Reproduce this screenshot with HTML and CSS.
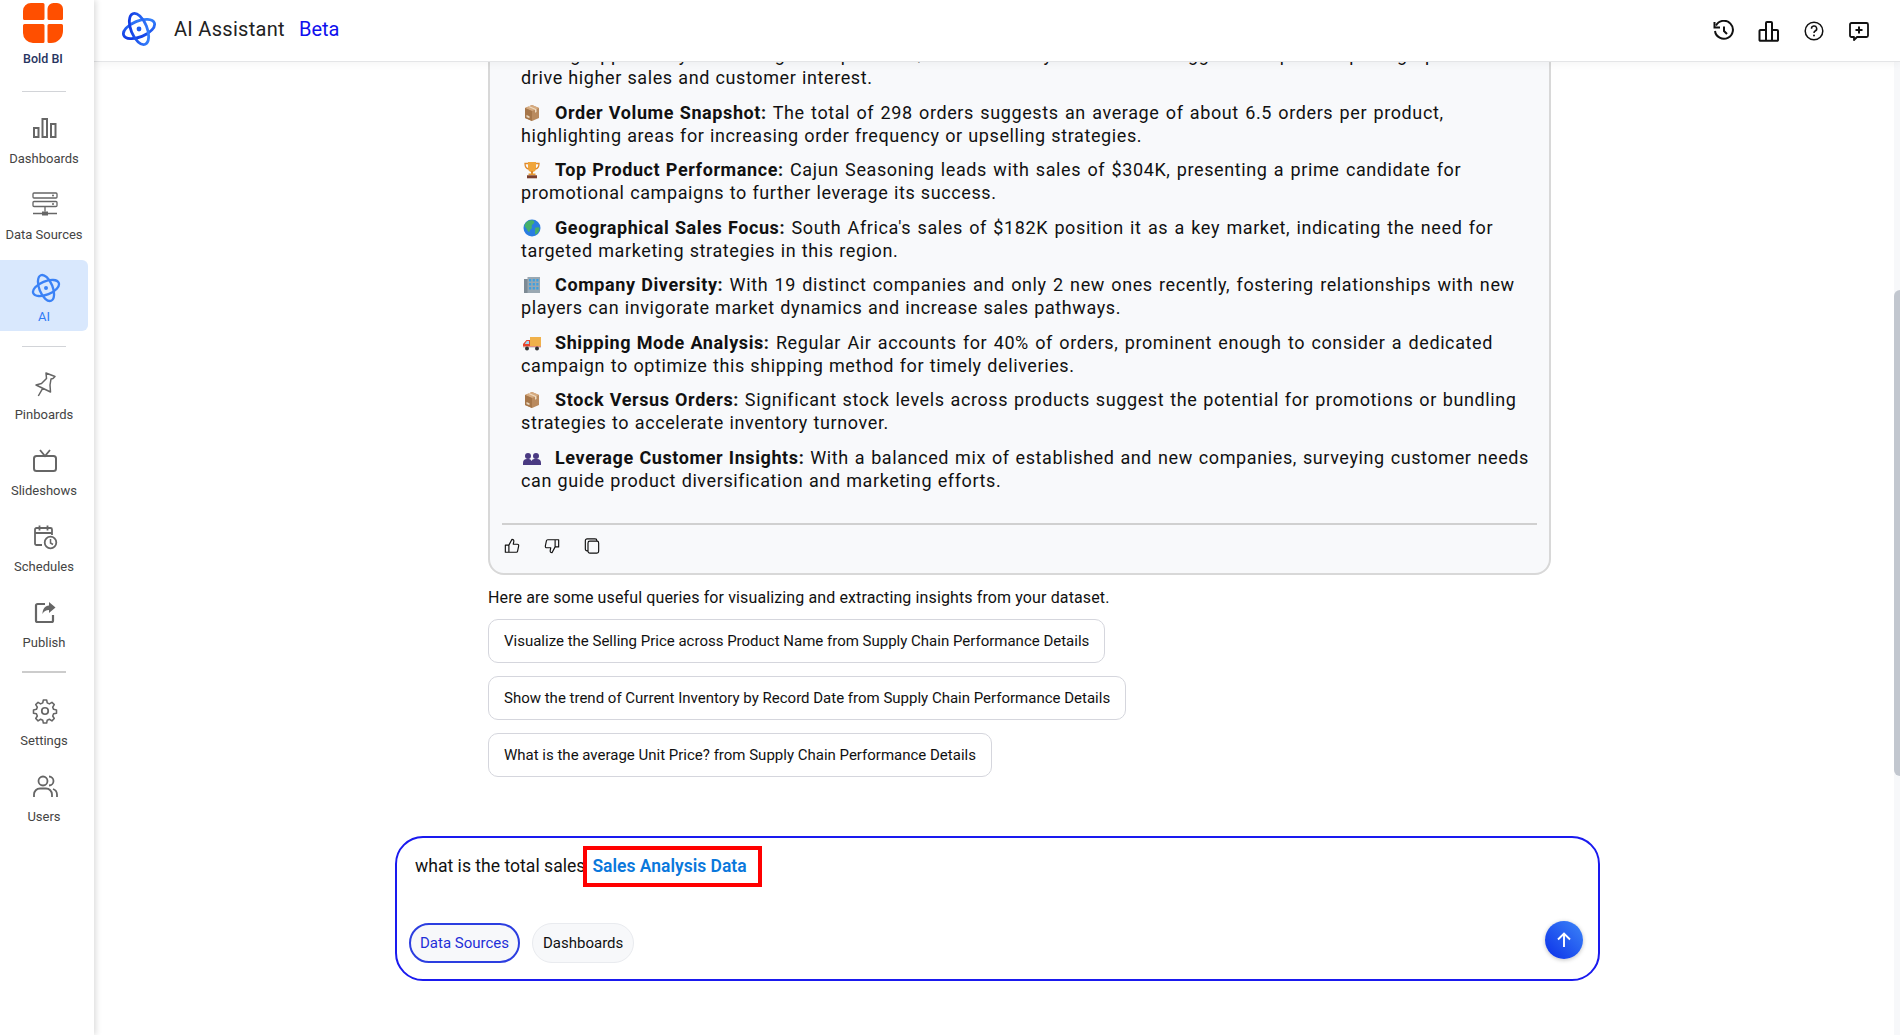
FILE: index.html
```html
<!DOCTYPE html>
<html lang="en">
<head>
<meta charset="utf-8">
<title>Bold BI - AI Assistant</title>
<link rel="stylesheet" href="styles.css">
</head>
<body>
<svg class="defs" width="0" height="0" aria-hidden="true">
  <defs>
    <linearGradient id="atomg" x1="0" y1="1" x2="1" y2="0"><stop offset="0" stop-color="#0b2fe0"/><stop offset="1" stop-color="#3b8cff"/></linearGradient>
    <symbol id="atom" viewBox="0 0 36 36">
      <g fill="none" stroke-width="2.8">
        <ellipse cx="18" cy="18" rx="16.5" ry="8" transform="rotate(-22 18 18)"/>
        <ellipse cx="18" cy="18" rx="16.5" ry="8" transform="rotate(68 18 18)"/>
      </g>
      <circle cx="18" cy="18" r="2.4" stroke="none" class="atom-dot"/>
    </symbol>
    <symbol id="box" viewBox="0 0 18 18">
      <path d="M9 1l7 3v10l-7 3-7-3V4z" fill="#b98a5e"/>
      <path d="M9 1l7 3-7 3-7-3z" fill="#d6ab80"/>
      <path d="M9 7v10l-7-3V4z" fill="#a67649"/>
      <path d="M5 2.800l7 3v3l1.500-.7V5.200L6.500 2.200z" fill="#efdcc2"/>
      <path d="M3.500 11l3 1.300v2l-3-1.300z" fill="#e8d5bb"/>
    </symbol>
  </defs>
</svg>
<div class="app">
  <nav class="sidebar">
    <div class="brand">
      <svg class="brand-logo" viewBox="0 0 40 40">
        <path d="M0 8a8 8 0 0 1 8-8h12a1.500 1.500 0 0 1 1.500 1.500V15.500A1.500 1.500 0 0 1 20 17H1.500A1.500 1.500 0 0 1 0 15.500zM24.500 6a6 6 0 0 1 6-6H34a6 6 0 0 1 6 6v9.500a1.500 1.500 0 0 1-1.500 1.500H26a1.500 1.500 0 0 1-1.500-1.500zM0 22.500A1.500 1.500 0 0 1 1.500 21H20a1.500 1.500 0 0 1 1.500 1.500V38.500A1.500 1.500 0 0 1 20 40H10A10 10 0 0 1 0 30zM24.500 22.500A1.500 1.500 0 0 1 26 21h12.500a1.500 1.500 0 0 1 1.500 1.500V28a12 12 0 0 1-12 12h-2a1.500 1.500 0 0 1-1.500-1.500z" fill="#ff4f00"/>
      </svg>
      <span class="brand-name">Bold BI</span>
    </div>
    <hr class="nav-rule rule-brand">
    <a class="nav-item">
      <svg class="nav-icon" viewBox="0 0 26 26"><g fill="none" stroke="#666" stroke-width="2"><rect x="2" y="12" width="4.500" height="9"/><rect x="10.500" y="3" width="4.500" height="18"/><rect x="19" y="8" width="4.500" height="13"/></g></svg>
      <span>Dashboards</span>
    </a>
    <a class="nav-item">
      <svg class="nav-icon" viewBox="0 0 26 26"><g fill="none" stroke="#666" stroke-width="1.300"><rect x="1" y="1" width="24" height="5" rx="1"/><rect x="1" y="9.500" width="24" height="5" rx="1"/></g><path d="M13 14.500v5M1 21.500h24" stroke="#666" stroke-width="1.300"/><rect x="10" y="19.500" width="6" height="4" fill="#666"/><circle cx="21" cy="3.500" r="1" fill="#666"/><circle cx="21" cy="12" r="1" fill="#666"/></svg>
      <span>Data Sources</span>
    </a>
    <a class="nav-item active">
      <svg class="nav-icon ai-icon" viewBox="0 0 36 36"><use href="#atom"/></svg>
      <span>AI</span>
    </a>
    <hr class="nav-rule rule-ai">
    <a class="nav-item">
      <svg class="nav-icon" viewBox="0 0 26 26"><path d="M14 1l9 3.500-2 2-2 .5-1 6 .5 7L4 13l5.500-1.500 5-5zM10.700 16.300L6.300 24" fill="none" stroke="#666" stroke-width="1.500" stroke-linejoin="round"/></svg>
      <span>Pinboards</span>
    </a>
    <a class="nav-item">
      <svg class="nav-icon" viewBox="0 0 26 26"><rect x="2" y="8" width="22" height="15" rx="2.500" fill="none" stroke="#666" stroke-width="2"/><path d="M8 2l5 6 5-6" fill="none" stroke="#666" stroke-width="1.800"/></svg>
      <span>Slideshows</span>
    </a>
    <a class="nav-item">
      <svg class="nav-icon" viewBox="0 0 26 26"><path d="M10 21H4.500A1.500 1.500 0 0 1 3 19.500V5.500A1.500 1.500 0 0 1 4.500 4h14A1.500 1.500 0 0 1 20 5.500V11M3 9h17M7.500 1.500v5M15.500 1.500v5" fill="none" stroke="#666" stroke-width="1.800"/><circle cx="18.500" cy="18.500" r="5.800" fill="none" stroke="#666" stroke-width="1.800"/><path d="M18.500 15v4l2.500 1.500" fill="none" stroke="#666" stroke-width="1.500"/></svg>
      <span>Schedules</span>
    </a>
    <a class="nav-item">
      <svg class="nav-icon" viewBox="0 0 26 26"><path d="M13 4H5.500A1.500 1.500 0 0 0 4 5.500v15A1.500 1.500 0 0 0 5.500 22h14a1.500 1.500 0 0 0 1.500-1.500V15" fill="none" stroke="#666" stroke-width="2.200"/><path d="M17 2l6.500 5.500L17 13v-3c-3 0-5 1-6.500 4 0-5 2.500-8 6.500-8.500z" fill="#666"/></svg>
      <span>Publish</span>
    </a>
    <hr class="nav-rule rule-publish">
    <a class="nav-item">
      <svg class="nav-icon" viewBox="0 0 24 24"><path d="M10.300 1.700h3.400l.6 3 2.200 1 2.600-1.600 2.400 2.400-1.600 2.600.9 2.200 3 .6v3.400l-3 .6-.9 2.200 1.600 2.600-2.400 2.400-2.600-1.600-2.200.9-.6 3h-3.400l-.6-3-2.200-.9-2.600 1.600-2.400-2.400 1.600-2.600-.9-2.200-3-.6v-3.400l3-.6.9-2.200-1.600-2.600 2.400-2.400 2.600 1.600 2.200-1z" transform="translate(12 12) scale(.9) translate(-12 -13)" fill="none" stroke="#666" stroke-width="1.600" stroke-linejoin="round"/><circle cx="12" cy="12" r="3" fill="none" stroke="#666" stroke-width="1.600"/></svg>
      <span>Settings</span>
    </a>
    <a class="nav-item">
      <svg class="nav-icon" viewBox="0 0 26 26"><circle cx="11" cy="7" r="4.500" fill="none" stroke="#666" stroke-width="1.800"/><path d="M2 23v-2.500a6 6 0 0 1 6-6h6a6 6 0 0 1 6 6V23M17 2.500a4.500 4.500 0 0 1 0 9M21 15a6 6 0 0 1 4 5.500V23" fill="none" stroke="#666" stroke-width="1.800"/></svg>
      <span>Users</span>
    </a>
  </nav>
  <div class="workspace">
    <header class="topbar">
      <svg class="top-logo" viewBox="0 0 36 36"><use href="#atom"/></svg>
      <span class="top-title">AI Assistant</span>
      <span class="top-beta">Beta</span>
      <div class="top-actions">
        <svg class="top-icon" viewBox="0 0 22 22"><path d="M3 5.500A9 9 0 1 1 2 11" fill="none" stroke="#111" stroke-width="2"/><path d="M1.500 2v5.500H7" fill="none" stroke="#111" stroke-width="2"/><path d="M11 6.500V11l3 3" fill="none" stroke="#111" stroke-width="2"/></svg>
        <svg class="top-icon" viewBox="0 0 22 22"><path d="M1.500 20V11a1 1 0 0 1 1-1h5.500V3a1 1 0 0 1 1-1h4a1 1 0 0 1 1 1v7h5a1 1 0 0 1 1 1v9a.8.8 0 0 1-.8.800H2.300a.8.8 0 0 1-.8-.8zM8 10v10.500M14 10v10.500" fill="none" stroke="#111" stroke-width="2"/></svg>
        <svg class="top-icon" viewBox="0 0 22 22"><circle cx="11" cy="11" r="8.800" fill="none" stroke="#111" stroke-width="1.500"/><path d="M8.500 8.700a2.600 2.600 0 1 1 3.700 2.300c-.9.500-1.200 1-1.200 2" fill="none" stroke="#111" stroke-width="1.500"/><circle cx="11" cy="15.500" r="1" fill="#111"/></svg>
        <svg class="top-icon" viewBox="0 0 22 22"><path d="M3.500 3h15A1.500 1.500 0 0 1 20 4.500v11a1.500 1.500 0 0 1-1.500 1.500H9l-3 3v-3H3.500A1.500 1.500 0 0 1 2 15.500v-11A1.500 1.500 0 0 1 3.500 3z" fill="none" stroke="#111" stroke-width="1.800" stroke-linejoin="round"/><path d="M11 6.500v7M7.500 10h7" stroke="#111" stroke-width="2"/></svg>
      </div>
    </header>
    <div class="main">
      <div class="thread">
        <section class="answer">
          <div class="answer-body">
            <p>Pricing Opportunity: An average unit price of $22 and healthy stock levels suggest competitive pricing options to<br>drive higher sales and customer interest.</p>
            <p><svg class="emoji" viewBox="0 0 18 18"><use href="#box"/></svg><b>Order Volume Snapshot:</b> The total of 298 orders suggests an average of about 6.5 orders per product, highlighting areas for increasing order frequency or upselling strategies.</p>
            <p><svg class="emoji" viewBox="0 0 18 18"><path d="M5 1h8v6a4 4 0 0 1-8 0z" fill="#f0a53a"/><path d="M5 2.500H2c0 3 1 5 3.500 5.500M13 2.500h3c0 3-1 5-3.500 5.500" fill="none" stroke="#e08a2a" stroke-width="1.300"/><rect x="8" y="10" width="2" height="3" fill="#d9862c"/><rect x="5.500" y="12.500" width="7" height="1.800" fill="#e59a35"/><rect x="4" y="14.300" width="10" height="3" fill="#7c3f2c"/></svg><b>Top Product Performance:</b> Cajun Seasoning leads with sales of $304K, presenting a prime candidate for promotional campaigns to further leverage its success.</p>
            <p><svg class="emoji" viewBox="0 0 18 18"><circle cx="9" cy="9" r="8.500" fill="#2a7de1"/><path d="M5 2c2-1 5-1 6 0 1 2-1 3-2 4s1 3-1 4-1 3-2 3-2-3-3-4-2-2-1-4 2-2 3-3zM12 9c2-1 4-1 4.500 0 0 3-2 6-4 6.500-1-2 0-3-.5-6.500z" fill="#46b06a"/></svg><b>Geographical Sales Focus:</b> South Africa's sales of $182K position it as a key market, indicating the need for targeted marketing strategies in this region.</p>
            <p><svg class="emoji" viewBox="0 0 18 18"><rect x="1" y="3" width="4" height="14" fill="#7d8a94"/><rect x="4.500" y="1" width="12.500" height="16" fill="#9aa8b2"/><g fill="#3fa0e0"><rect x="6" y="3" width="2.200" height="2.500"/><rect x="9.700" y="3" width="2.200" height="2.500"/><rect x="13.300" y="3" width="2.200" height="2.500"/><rect x="6" y="7" width="2.200" height="2.500"/><rect x="9.700" y="7" width="2.200" height="2.500"/><rect x="13.300" y="7" width="2.200" height="2.500"/><rect x="6" y="11" width="2.200" height="2.500"/><rect x="9.700" y="11" width="2.200" height="2.500"/><rect x="13.300" y="11" width="2.200" height="2.500"/></g></svg><b>Company Diversity:</b> With 19 distinct companies and only 2 new ones recently, fostering relationships with new players can invigorate market dynamics and increase sales pathways.</p>
            <p><svg class="emoji" viewBox="0 0 18 18"><rect x="7" y="3" width="11" height="9" fill="#f0b14a"/><path d="M7 6H3.500L0 10v4h18v-2H7z" fill="#e8452c"/><path d="M3.800 7H6v3H1.800z" fill="#9fd6f0"/><rect x="0" y="12.500" width="18" height="1.500" fill="#d8d8d8"/><circle cx="4" cy="14.500" r="2" fill="#333"/><circle cx="14" cy="14.500" r="2" fill="#333"/></svg><b>Shipping Mode Analysis:</b> Regular Air accounts for 40% of orders, prominent enough to consider a dedicated campaign to optimize this shipping method for timely deliveries.</p>
            <p><svg class="emoji" viewBox="0 0 18 18"><use href="#box"/></svg><b>Stock Versus Orders:</b> Significant stock levels across products suggest the potential for promotions or bundling strategies to accelerate inventory turnover.</p>
            <p><svg class="emoji" viewBox="0 0 18 18"><g fill="#4a3a82"><circle cx="5" cy="7" r="3"/><circle cx="13" cy="7" r="3"/><path d="M0 16v-2a4 4 0 0 1 4-4h2a3 3 0 0 1 2.500 2 3 3 0 0 1 3-2H14a4 4 0 0 1 4 4v2z"/></g></svg><b>Leverage Customer Insights:</b> With a balanced mix of established and new companies, surveying customer needs can guide product diversification and marketing efforts.</p>
          </div>
          <div class="answer-actions">
            <svg class="act-icon" viewBox="0 0 18 18"><path d="M5.500 8L9 1.500c1.500 0 2.300 1 2 2.500l-.6 3H15a1.500 1.500 0 0 1 1.500 1.800l-1.200 6A1.500 1.500 0 0 1 13.800 16H1.500V8h4zM5.500 8v8" fill="none" stroke="#111" stroke-width="1.300" stroke-linejoin="round"/></svg>
            <svg class="act-icon" viewBox="0 0 18 18"><path d="M12.500 10L9 16.500c-1.500 0-2.300-1-2-2.500l.6-3H3a1.500 1.500 0 0 1-1.500-1.800l1.200-6A1.500 1.500 0 0 1 4.200 2h12.300v8h-4zM12.500 10V2" fill="none" stroke="#111" stroke-width="1.300" stroke-linejoin="round"/></svg>
            <svg class="act-icon" viewBox="0 0 18 18"><rect x="4.500" y="3.500" width="12" height="13.500" rx="2" fill="none" stroke="#111" stroke-width="1.300"/><path d="M4.500 14.500H3.500a2 2 0 0 1-2-2V3a2 2 0 0 1 2-2h9a2 2 0 0 1 2 2v.5" fill="none" stroke="#111" stroke-width="1.300"/></svg>
          </div>
        </section>
        <p class="suggest-intro">Here are some useful queries for visualizing and extracting insights from your dataset.</p>
        <div class="suggestions">
          <button class="suggestion">Visualize the Selling Price across Product Name from Supply Chain Performance Details</button>
          <button class="suggestion">Show the trend of Current Inventory by Record Date from Supply Chain Performance Details</button>
          <button class="suggestion">What is the average Unit Price? from Supply Chain Performance Details</button>
        </div>
      </div>
      <form class="composer">
        <div class="composer-text">
          <span class="typed">what is the total sales</span>
          <span class="mention">Sales Analysis Data</span>
        </div>
        <div class="composer-foot">
          <button type="button" class="pill pill-on">Data Sources</button>
          <button type="button" class="pill">Dashboards</button>
          <button type="button" class="send" aria-label="Send">
            <svg viewBox="0 0 20 20" width="20" height="20"><path d="M10 17V3.500M4 9.500l6-6 6 6" fill="none" stroke="#fff" stroke-width="1.900"/></svg>
          </button>
        </div>
      </form>
      <div class="scrollbar"><div class="scroll-thumb"></div></div>
    </div>
  </div>
</div>
</body>
</html>
```
FILE: styles.css
```css
* { box-sizing: border-box; }
html, body { margin: 0; height: 100%; overflow: hidden; background: #fff; }
body { font-family: Roboto, "Liberation Sans", sans-serif; color: #111; }
.defs { position: absolute; }
.app { display: flex; height: 1035px; }

.sidebar {
  width: 94px; flex: none; display: flex; flex-direction: column; align-items: stretch;
  background: #fff; box-shadow: 2px 0 6px rgba(0,0,0,.14); z-index: 3; padding-top: 3px;
}
.brand { display: flex; flex-direction: column; align-items: center; width: 86px; }
.brand-logo { width: 40px; height: 40px; }
.brand-name { font-size: 12.500px; font-weight: 500; color: #27345f; margin-top: 9px; line-height: 14px; }
.nav-rule { width: 44px; height: 1px; border: 0; background: #d2d4d8; margin: 6px 0 0 22px; flex: none; }
.rule-brand { margin-top: 25px; margin-bottom: 14px; }
.nav-item {
  display: flex; flex-direction: column; align-items: center; height: 76px; padding-top: 10px;
  width: 88px; font-size: 13px; line-height: 16px; color: #444; flex: none;
}
.nav-item .nav-icon { width: 26px; height: 26px; margin-left: 2px; margin-bottom: 9px; flex: none; }
.nav-item.active { height: 71px; padding-top: 13px; margin-top: 2px; background: #d9e8fd; color: #2f7bf6; border-radius: 0 6px 6px 0; }
.nav-item .ai-icon { stroke: #3b82f6; fill: #3b82f6; width: 30px; height: 30px; margin-bottom: 6px; margin-left: 4px; }
.rule-ai { margin-top: 15px; margin-bottom: 15px; }
.rule-publish { height: 2px; background: #ccc; margin-top: 5px; margin-bottom: 15px; }

.workspace { flex: 1; min-width: 0; display: flex; flex-direction: column; height: 100%; }
.topbar {
  height: 62px; flex: none; display: flex; align-items: center; padding: 0 30px 3px 27px;
  background: #fff; border-bottom: 1px solid #e4e5e7; box-shadow: 0 3px 8px rgba(0,0,0,.04); z-index: 2;
}
.top-logo { width: 36px; height: 36px; stroke: url(#atomg); fill: #1e5cf0; margin-right: 17px; }
.top-title { font-size: 20px; color: #222; letter-spacing: .3px; }
.top-beta { font-size: 20px; color: #1010ee; margin-left: 14px; }
.top-actions { margin-left: auto; display: flex; gap: 23px; align-items: center; padding-top: 4px; }
.top-icon { width: 22px; height: 22px; }

.main { flex: 1; min-height: 0; position: relative; overflow: hidden; display: flex; flex-direction: column; justify-content: flex-end; align-items: flex-start; padding: 0 0 54px 301px; }
.thread { width: 1063px; margin-left: 93px; flex: none; }
.answer { border: 2px solid #d8d8d8; border-radius: 0 0 16px 16px; background: #f8f9fb; padding: 0 12px; }
.answer-body { padding: 0 0 20px 19px; width: 1033px; }
.answer-body p { margin: 0 0 11.500px; font-size: 18px; line-height: 23px; letter-spacing: .6px; word-spacing: .5px; color: #111; }
.answer-body p::first-line { word-spacing: 1.300px; }
.answer-body p:nth-last-child(-n+2)::first-line { word-spacing: .900px; }
.answer-body b { font-weight: 700; word-spacing: .5px; }
.emoji { width: 18px; height: 18px; vertical-align: -3px; margin: 0 14px 0 2px; }
.answer-actions { border-top: 2px solid #d0d0d0; height: 50px; display: flex; align-items: flex-start; gap: 24px; padding: 13px 0 0 2px; }
.act-icon { width: 16px; height: 16px; }
.suggest-intro { margin: 13px 0 12px; font-size: 16px; line-height: 19px; letter-spacing: .12px; color: #111; }
.suggestions { display: flex; flex-direction: column; align-items: flex-start; gap: 13px; }
.suggestion {
  height: 44px; padding: 0 15px; background: #fff; border: 1px solid #d5d6dd; border-radius: 10px;
  font: 15px Roboto, sans-serif; color: #111;
}
.composer {
  width: 1205px; height: 145px; margin-top: 59px; flex: none; border: 2px solid #1a1aef; border-radius: 28px;
  background: #fff; display: flex; flex-direction: column; padding: 8px 12px 16px 12px;
}
.composer-text { display: flex; align-items: center; height: 40px; padding-left: 6px; }
.typed { font-size: 17.600px; color: #111; }
.mention { margin-left: -2px; border: 4px solid #f00; height: 41px; line-height: 33px; padding: 0 11px 0 5px; font-size: 17.500px; font-weight: 600; color: #0a78dc; }
.composer-foot { display: flex; align-items: center; margin-top: auto; gap: 12px; }
.pill { height: 40px; border-radius: 20px; border: 1px solid #e9ebef; background: #f7f8fa; font: 15px Roboto, sans-serif; color: #111; padding: 0 10px; }
.pill-on { border: 2px solid #2c3ee0; color: #1f2fd8; padding: 0 9px; }
.send {
  margin-left: auto; margin-right: 3px; margin-top: -6px; width: 38px; height: 38px; border-radius: 50%; border: 0; padding: 0;
  background: linear-gradient(45deg, #0a2fe8, #3d86f8); box-shadow: 0 1px 4px rgba(0,0,0,.25);
  display: flex; align-items: center; justify-content: center;
}
.scrollbar { position: absolute; top: 0; right: 0; bottom: 0; width: 6px; background: #f7f8fa; }
.scroll-thumb { height: 486px; margin-top: 228px; background: #c2c7cf; border-radius: 6px 0 0 6px; }
```
